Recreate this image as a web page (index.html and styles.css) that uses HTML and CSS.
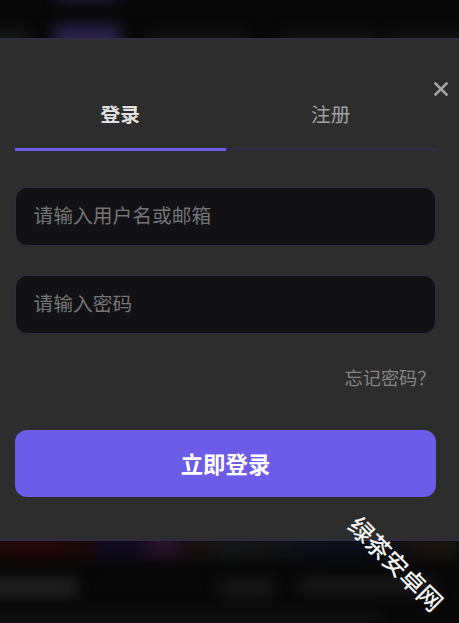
FILE: index.html
```html
<!DOCTYPE html>
<html lang="zh-CN">
<head>
<meta charset="utf-8">
<title>登录</title>
<link rel="stylesheet" href="styles.css">
</head>
<body>
<div class="backdrop backdrop-top"></div>
<main class="dialog">
  <button class="close" type="button" aria-label="关闭">
    <svg viewBox="0 0 16 16" width="16" height="16"><path d="M1.6 1.6 14.4 14.4M14.4 1.6 1.6 14.4"/></svg>
  </button>
  <nav class="tabs">
    <a class="tab active">登录</a>
    <a class="tab">注册</a>
  </nav>
  <form class="form">
    <input class="field" type="text" placeholder="请输入用户名或邮箱">
    <input class="field" type="password" placeholder="请输入密码">
    <a class="forgot">忘记密码？</a>
    <button class="submit" type="button">立即登录</button>
  </form>
</main>
<div class="backdrop backdrop-bottom"></div>
<div class="watermark">绿茶安卓网</div>
</body>
</html>
```
FILE: styles.css
```css
* {
  box-sizing: border-box;
}

body {
  margin: 0;
  height: 623px;
  position: relative;
  display: flex;
  flex-direction: column;
  overflow: hidden;
  background: #080808;
  color: #e0e0e0;
  font-family: "Noto Sans CJK SC", sans-serif;
}

.backdrop {
  position: relative;
  overflow: hidden;
  background: #080808;
}

.backdrop::before {
  content: "";
  position: absolute;
  inset: -20px;
  filter: blur(7px);
  background-repeat: no-repeat;
}

.backdrop-top {
  height: 38px;
}

/* Soft shapes of the page behind the dialog; each layer is one block. */
.backdrop-top::before {
  background-image:
    linear-gradient(#2a224c, #2a224c),
    linear-gradient(#272046, #272046),
    linear-gradient(#171a17, #171a17),
    linear-gradient(#131313, #131313),
    linear-gradient(#141415, #141415),
    linear-gradient(#131313, #131313);
  background-size: 66px 40px, 60px 20px, 48px 20px, 95px 20px, 90px 20px, 80px 20px;
  background-position: 74px 45px, 77px 0, 0 50px, 170px 51px, 305px 51px, 410px 51px;
}

.dialog {
  position: relative;
  height: 503px;
  padding: 48px 23px 0 15px;
  background: #2d2d2d;
  border: solid #302d40;
  border-width: 2px 0;
}

.close {
  position: absolute;
  top: 40.5px;
  right: 10px;
  width: 16px;
  height: 16px;
  padding: 0;
  border: 0;
  background: none;
}

.close svg {
  display: block;
  fill: none;
  stroke: #a5a5a5;
  stroke-width: 2.7;
  stroke-linecap: butt;
}

.tabs {
  display: flex;
  height: 63px;
  border-bottom: 3px solid #302d40;
}

.tab {
  flex: 1;
  height: 63px;
  padding-top: 11px;
  font-size: 19.7px;
  line-height: 30px;
  text-align: center;
  color: #a0a0a0;
}

.tab.active {
  border-bottom: 3px solid #6c5ce7;
  font-weight: 700;
  color: #e0e0e0;
}

.form {
  display: flex;
  flex-direction: column;
  padding-top: 36px;
}

.field {
  width: 100%;
  height: 58.5px;
  margin: 0 0 29.5px;
  padding: 0 17.5px 4px;
  border: 1px solid #302d40;
  border-radius: 12px;
  background: #121116;
  font: 400 19.75px "Noto Sans CJK SC", sans-serif;
  color: #e0e0e0;
  outline: 0;
}

.field::placeholder {
  color: #757575;
  opacity: 1;
}

.forgot {
  align-self: flex-end;
  width: 91.5px;
  height: 27px;
  margin-top: 1px;
  font-size: 18.2px;
  line-height: 27px;
  white-space: nowrap;
  color: #858585;
}

.submit {
  height: 67.5px;
  margin-top: 38.5px;
  padding: 0 0 1px;
  border: 0;
  border-radius: 12px;
  background: #6c5ce7;
  font: 700 22.4px "Noto Sans CJK SC", sans-serif;
  color: #fff;
}

.backdrop-bottom {
  flex: 1;
}

.backdrop-bottom::before {
  background-image:
    linear-gradient(90deg, #1a0d08 20px, #25070a 35px, #25070a 75px, #1a0a07 85px, #1c0707 112px, #100b22 122px, #100b22 160px, #29122a 175px, #29122a 195px, #171010 202px, #171010 230px, #151718 240px, #131314 290px, #0d1019 330px, #0b0e17 400px, #1a120f 450px, #171812 479px),
    linear-gradient(#222, #222),
    linear-gradient(#181818, #181818),
    linear-gradient(#191919, #191919),
    linear-gradient(#111, #111);
  background-size: 479px 37px, 97px 17px, 56px 15px, 135px 15px, 400px 14px;
  background-position: 0 0, 0 58px, 239px 59px, 320px 58px, 0 90px;
}

.watermark {
  position: absolute;
  left: 336px;
  top: 544.5px;
  width: 120px;
  height: 36px;
  font-size: 24.2px;
  font-weight: 400;
  line-height: 36px;
  text-align: center;
  white-space: nowrap;
  color: #fff;
  -webkit-text-stroke: 0.25px #fff;
  transform: rotate(45deg);
}
```
